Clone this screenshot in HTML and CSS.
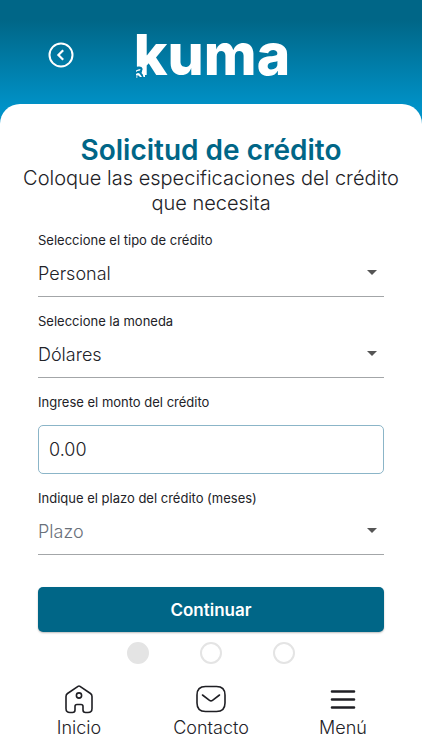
FILE: index.html
```
<!DOCTYPE html>
<html lang="es">
<head>
<meta charset="utf-8">
<meta name="viewport" content="width=device-width, initial-scale=1">
<title>Solicitud de crédito</title>
<link rel="stylesheet" href="styles.css">
</head>
<body>
<header class="header">
  <button class="back" type="button" aria-label="Volver">
    <svg viewBox="0 0 26 26" width="26" height="26" fill="none" stroke="#fff" stroke-width="2">
      <circle cx="13" cy="13" r="11.5"/>
      <path d="M15.2 8.2 10.4 13l4.8 4.8" stroke-width="2.2"/>
    </svg>
  </button>
  <div class="logo">
    kuma
    <svg class="logo-mark" viewBox="0 0 12 14" width="12" height="14">
      <path fill="#007dab" d="M0 1Q2 3 4 2.600T7.500 3Q9 4 8.500 6.500L8 8.500 10.500 9V14H0Z"/>
      <path fill="#fff" d="M2 6.500Q4 5 6.500 5L6 6.500 3.500 7 2 8ZM2 10Q4 8.500 5.500 9.500L8 13H6L4.500 11.500 2 11.500ZM2 12.500H3.500V13.500H2ZM8.500 6 11 7V13H9.500Q9 10 7.500 9Z"/>
    </svg>
  </div>
</header>
<main class="sheet">
  <h1 class="title">Solicitud de crédito</h1>
  <p class="subtitle">Coloque las especificaciones del crédito que necesita</p>
  <form class="form">
    <div class="field">
      <label for="tipo">Seleccione el tipo de crédito</label>
      <div class="select-wrap">
        <select id="tipo"><option>Personal</option></select>
        <svg class="caret" viewBox="0 0 10 5" width="10" height="5"><path d="M0 0h10L5 5Z"/></svg>
      </div>
    </div>
    <div class="field">
      <label for="moneda">Seleccione la moneda</label>
      <div class="select-wrap">
        <select id="moneda"><option>Dólares</option></select>
        <svg class="caret" viewBox="0 0 10 5" width="10" height="5"><path d="M0 0h10L5 5Z"/></svg>
      </div>
    </div>
    <div class="field field-amount">
      <label for="monto">Ingrese el monto del crédito</label>
      <input id="monto" type="text" inputmode="decimal" value="0.00">
    </div>
    <div class="field">
      <label for="plazo">Indique el plazo del crédito (meses)</label>
      <div class="select-wrap">
        <select id="plazo" class="empty"><option>Plazo</option></select>
        <svg class="caret" viewBox="0 0 10 5" width="10" height="5"><path d="M0 0h10L5 5Z"/></svg>
      </div>
    </div>
    <button class="submit" type="submit">Continuar</button>
  </form>
  <div class="steps">
    <span class="step current"></span>
    <span class="step"></span>
    <span class="step"></span>
  </div>
  <nav class="nav">
    <a href="#inicio">
      <svg viewBox="0 0 30 30" width="30" height="30">
        <path d="M14 2.300 3.500 9.500Q2 10.600 2 12.500V24.500Q2 28.500 6 28.500H8.500Q11 28.500 11 26V22.500Q11 20.500 13 20.500H17Q19 20.500 19 22.500V26Q19 28.500 21.500 28.500H24Q28 28.500 28 24.500V12.500Q28 10.600 26.500 9.500L16 2.300Q15 1.600 14 2.300Z"/>
        <circle cx="15" cy="11.500" r="2.600"/>
      </svg>
      <span>Inicio</span>
    </a>
    <a href="#contacto">
      <svg viewBox="0 0 30 30" width="30" height="30">
        <path d="M9.500 2.500h11Q29 2.500 29 11v8Q29 27.500 20.500 27.500h-11Q1 27.500 1 19v-8Q1 2.500 9.500 2.500Z"/>
        <path d="m6.500 11 7 5.300q1.500 1.100 3 0l7-5.300"/>
      </svg>
      <span>Contacto</span>
    </a>
    <a href="#menu">
      <svg viewBox="0 0 30 30" width="30" height="30">
        <path class="bars" d="M4 7.500h22M4 15.500h22M4 23.500h22"/>
      </svg>
      <span>Menú</span>
    </a>
  </nav>
</main>
</body>
</html>
```
FILE: styles.css
```
* {
  box-sizing: border-box;
}

body {
  margin: 0;
  min-height: 100vh;
  display: flex;
  flex-direction: column;
  background: #fff linear-gradient(#006687 20px, #0092c8 108px, #0092c8 124px, #fff 124px);
  color: #222227;
  font-family: Inter, "Open Sans", sans-serif;
  font-weight: 300;
}

button,
input,
select {
  font: inherit;
  color: inherit;
}

.header {
  display: grid;
  grid-template-columns: 1fr auto 1fr;
  align-items: center;
  padding: 5px 46px 0 48px;
  height: 104px;
}

.back {
  justify-self: start;
  display: flex;
  padding: 0;
  border: 0;
  background: none;
}

.logo {
  position: relative;
  color: #fff;
  font-size: 57px;
  line-height: 64px;
  font-weight: 800;
}

.logo-mark {
  position: absolute;
  left: 0;
  bottom: 9px;
}

.sheet {
  flex: 1;
  padding: 30px 0 11px;
  border-radius: 20px 20px 0 0;
  background: #fff;
}

.title {
  margin: 0;
  color: #006687;
  font-size: 28px;
  line-height: 32px;
  font-weight: 600;
  text-align: center;
}

.subtitle {
  margin: 0 20px 16px;
  font-size: 20px;
  line-height: 25px;
  text-align: center;
}

.form {
  display: flex;
  flex-direction: column;
  gap: 16px;
  padding: 0 38px;
}

.field {
  display: flex;
  flex-direction: column;
  gap: 2px;
}

.field-amount {
  gap: 15px;
}

.field label {
  font-size: 13px;
  line-height: 16px;
  font-weight: 400;
}

.select-wrap {
  position: relative;
}

.select-wrap select {
  display: block;
  width: 100%;
  height: 47px;
  padding: 0;
  border: 0;
  border-bottom: 1px solid #a3a6a8;
  border-radius: 0;
  background: none;
  appearance: none;
  font-size: 18px;
}

.select-wrap .empty {
  color: #6a707a;
}

.caret {
  position: absolute;
  right: 7px;
  top: 20px;
  fill: #555;
  pointer-events: none;
}

.field input {
  height: 49px;
  padding: 0 10px;
  border: 1px solid #8bb5c8;
  border-radius: 5px;
  background: #fff;
  font-size: 18px;
}

.submit {
  height: 45px;
  margin-top: 16px;
  border: 0;
  border-radius: 5px;
  background: #006687;
  box-shadow: 0 1px 2px #0004;
  color: #fff;
  font-size: 17px;
  font-weight: 600;
}

.steps {
  display: flex;
  justify-content: center;
  gap: 51px;
  margin-top: 10px;
}

.step {
  width: 22px;
  height: 22px;
  border: 2px solid #e4e4e4;
  border-radius: 50%;
}

.current {
  background: #e4e4e4;
}

.nav {
  display: grid;
  grid-template-columns: repeat(3, 1fr);
  margin-top: 20px;
  padding: 0 13px;
}

.nav a {
  display: flex;
  flex-direction: column;
  align-items: center;
  gap: 3px;
  color: inherit;
  font-size: 18px;
  line-height: 22px;
  text-decoration: none;
}

.nav svg {
  fill: none;
  stroke: #1f1f24;
  stroke-width: 1.6;
  stroke-linecap: round;
  stroke-linejoin: round;
}

.nav .bars {
  stroke-width: 2.6;
}
```
